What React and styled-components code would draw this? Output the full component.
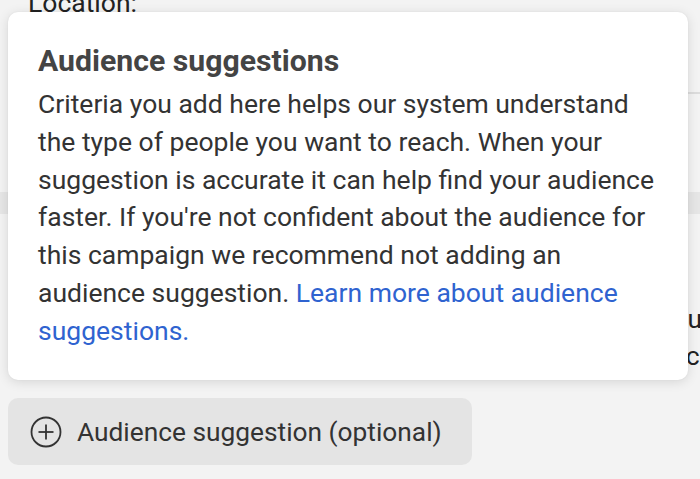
import React from 'react';
import styled, { createGlobalStyle } from 'styled-components';

const GlobalStyle = createGlobalStyle`
  html, body {
    margin: 0;
    padding: 0;
    background: #f3f3f3;
    font-family: Roboto, "Noto Sans", "Liberation Sans", sans-serif;
    overflow: hidden;
  }
`;

const Page = styled.div`
  position: relative;
  width: 700px;
  height: 479px;
  overflow: hidden;
`;

const Underlay = styled.div`
  display: flex;
  flex-direction: column;
  padding-left: 8px;
`;

const FieldLabel = styled.div`
  margin-top: -13px;
  padding-left: 20px;
  font-size: 26.5px;
  line-height: 32px;
  color: #222;
`;

const FieldBox = styled.div`
  height: 73px;
  border-bottom: 2px solid #dcdcdc;
`;

const Band = styled.div`
  margin-top: 98px;
  height: 22px;
  margin-left: -8px;
  background: #e6e6e6;
`;

const SideText = styled.div`
  margin-top: 86px;
  padding-left: 662px;
  font-size: 26.5px;
  line-height: 37px;
  color: #222;
  white-space: nowrap;
`;

const AddButton = styled.button`
  margin-top: 24px;
  width: 464px;
  height: 67px;
  display: flex;
  align-items: center;
  gap: 15px;
  padding: 0 0 0 22px;
  border: none;
  border-radius: 10px;
  background: #e4e4e4;
  font-family: inherit;
  font-size: 26.3px;
  color: #333;
  cursor: pointer;
`;

const Tooltip = styled.div`
  position: absolute;
  top: 12px;
  left: 8px;
  width: 680px;
  box-sizing: border-box;
  padding: 31px 30px 30px;
  background: #fff;
  border-radius: 10px;
  box-shadow: 0 2px 12px rgba(0, 0, 0, 0.12), 0 0 2px rgba(0, 0, 0, 0.06);
`;

const Title = styled.h2`
  margin: 0 0 6px;
  font-size: 30.2px;
  line-height: 36px;
  font-weight: 700;
  color: #444;
`;

const Body = styled.p`
  margin: 0;
  font-size: 26.5px;
  line-height: 37.8px;
  color: #333;
`;

const Link = styled.a`
  color: #2f63d0;
  text-decoration: none;
`;

function PlusCircle() {
  return (
    <svg width="32" height="32" viewBox="0 0 32 32" fill="none" stroke="#333" strokeWidth="1.8">
      <circle cx="16" cy="16" r="14.5" />
      <line x1="16" y1="8.5" x2="16" y2="23.5" />
      <line x1="8.5" y1="16" x2="23.5" y2="16" />
    </svg>
  );
}

export default function App() {
  return (
    <>
      <GlobalStyle />
      <Page>
        <Underlay>
          <FieldLabel>Location:</FieldLabel>
          <FieldBox />
          <Band />
          <SideText>
            Duration
            <br />
            Schedule
          </SideText>
          <AddButton type="button">
            <PlusCircle />
            Audience suggestion (optional)
          </AddButton>
        </Underlay>
        <Tooltip>
          <Title>Audience suggestions</Title>
          <Body>
            Criteria you add here helps our system understand the type of people you want to
            reach. When your suggestion is accurate it can help find your audience faster. If
            you're not confident about the audience for this campaign we recommend not adding an
            audience suggestion. <Link href="#">Learn more about audience suggestions.</Link>
          </Body>
        </Tooltip>
      </Page>
    </>
  );
}
